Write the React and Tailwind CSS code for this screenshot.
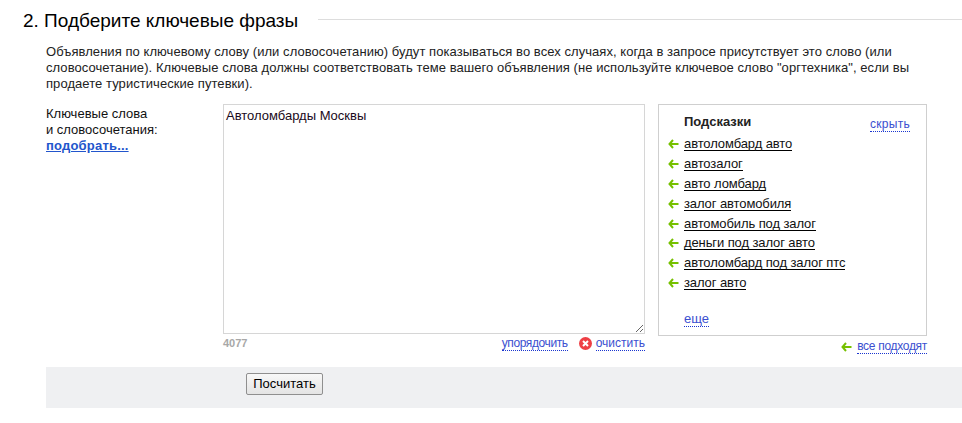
import React from 'react';

const hints = [
  'автоломбард авто',
  'автозалог',
  'авто ломбард',
  'залог автомобиля',
  'автомобиль под залог',
  'деньги под залог авто',
  'автоломбард под залог птс',
  'залог авто',
];

const GreenArrow = () => (
  <svg width="11" height="10" viewBox="0 0 11 10" className="shrink-0">
    <path d="M5 1 L1.5 5 L5 9 M2 5 H10.5" fill="none" stroke="#76c000" strokeWidth="2" />
  </svg>
);

const DottedLink = ({ children, className = '' }) => (
  <a className={`text-[#3b4fd0] leading-[14px] border-b border-dotted border-[#1a35d0] cursor-pointer ${className}`}>{children}</a>
);

export default function App() {
  return (
    <div className="w-[962px] h-[423px] overflow-hidden bg-white text-[13px] leading-4 text-[#111] font-['Liberation_Sans',Arial,sans-serif]">
      <div className="flex items-center pl-[23px] pt-[9px] h-[33px]">
        <h2 className="text-[19px] leading-6 text-black whitespace-nowrap">2. Подберите ключевые фразы</h2>
        <div className="flex-1 h-px bg-[#ddd] ml-[20px] mb-[3px]"></div>
      </div>

      <div className="pl-[46px]">
        <p className="mt-[11px] h-[48px] text-[#222] tracking-[0.06px] whitespace-nowrap">
          Объявления по ключевому слову (или словосочетанию) будут показываться во всех случаях, когда в запросе присутствует это слово (или
          <br />
          словосочетание). Ключевые слова должны соответствовать теме вашего объявления (не используйте ключевое слово "оргтехника", если вы
          <br />
          продаете туристические путевки).
        </p>

        <div className="flex mt-[12px]">
          <div className="w-[177px] shrink-0 pt-[2px]">
            <div>Ключевые слова</div>
            <div>и словосочетания:</div>
            <a className="font-bold text-[#2255cc] underline tracking-[0.2px] cursor-pointer">подобрать...</a>
          </div>

          <div className="w-[422px] shrink-0">
            <textarea
              defaultValue="Автоломбарды Москвы"
              className="block w-[422px] h-[230px] border border-[#d6d6d6] px-[2px] py-[3px] text-[13px] leading-4 text-[#1a0a20] outline-none"
            />
            <div className="flex items-center justify-between mt-[2px] text-xs leading-[14px]">
              <span className="text-[#a8a8a8] font-bold text-[11px] -mt-px">4077</span>
              <div className="flex items-center">
                <DottedLink className="tracking-[-0.4px]">упорядочить</DottedLink>
                <svg width="13" height="13" viewBox="0 0 13 13" className="ml-[11px] mr-[4px]">
                  <circle cx="6.5" cy="6.5" r="6.5" fill="#ee3f45" />
                  <path d="M4 4 L9 9 M9 4 L4 9" stroke="#fff" strokeWidth="2" />
                </svg>
                <DottedLink>очистить</DottedLink>
              </div>
            </div>
          </div>

          <div className="w-[269px] shrink-0 ml-[13px]">
            <div className="h-[232px] border border-[#cfcfcf] pl-[9px] pr-[16px] pt-[9px]">
              <div className="flex justify-between">
                <b className="pl-[16px] text-[#222]">Подсказки</b>
                <span className="mt-[3px] text-xs leading-[14px] flex">
                  <DottedLink className="tracking-[0.3px]">скрыть</DottedLink>
                </span>
              </div>
              <ul className="mt-[2px]">
                {hints.map((h) => (
                  <li key={h} className="flex items-center gap-[5px] h-[19.9px]">
                    <GreenArrow />
                    <a className="text-[#111] leading-[13px] tracking-[-0.1px] border-b border-black cursor-pointer">{h}</a>
                  </li>
                ))}
              </ul>
              <div className="pl-[16px] mt-[19px] flex">
                <DottedLink>еще</DottedLink>
              </div>
            </div>
            <div className="flex justify-end items-center gap-[5px] mt-[3px] text-xs leading-[14px]">
              <GreenArrow />
              <DottedLink className="tracking-[-0.3px]">все подходят</DottedLink>
            </div>
          </div>
        </div>

        <div className="mt-[13px] h-[41px] bg-[#eff0f2] pl-[200px] pt-[6px]">
          <button className="w-[77px] h-[22px] border border-[#8f8f8f] rounded-[2px] bg-gradient-to-b from-[#f8f8f8] to-[#e4e4e4] text-[13px] leading-4 text-black">
            Посчитать
          </button>
        </div>
      </div>
    </div>
  );
}
